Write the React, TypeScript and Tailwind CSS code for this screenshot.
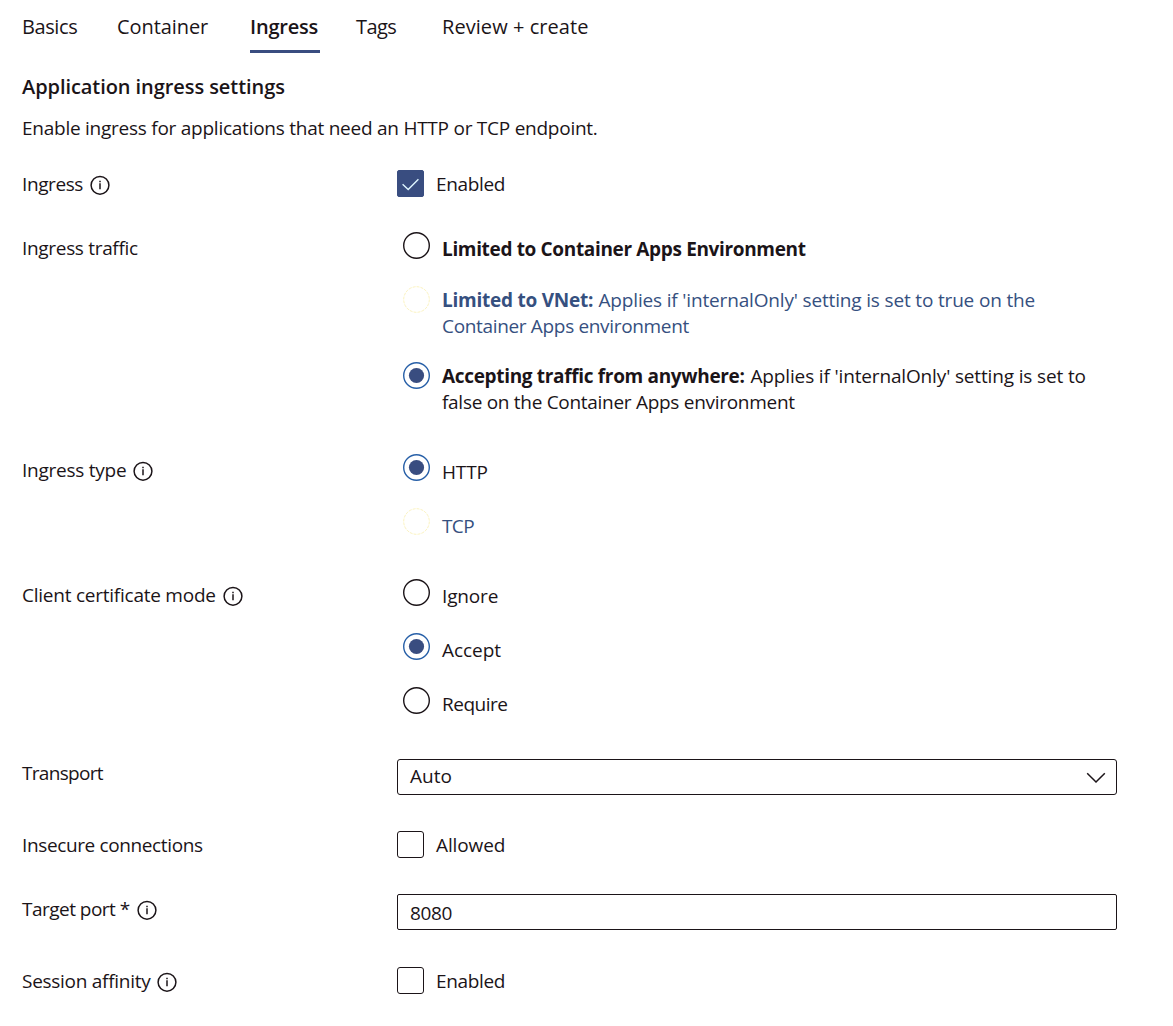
import React, { type ReactNode } from "react";

function InfoIcon({ className = "" }: { className?: string }) {
  return (
    <svg className={`mt-[4px] h-5 w-5 shrink-0 ${className}`} viewBox="0 0 20 20" fill="none" stroke="#1b1418">
      <circle cx="10" cy="10.3" r="8.9" strokeWidth="1.5" />
      <path d="M10 8.3v6" strokeWidth="1.5" />
      <path d="M10 5.7v1.5" strokeWidth="1.5" />
    </svg>
  );
}

function Row({ label, className, pad, icon, children }: {
  label: ReactNode; className: string; pad: string; icon?: string; children: ReactNode;
}) {
  return (
    <div className={`flex items-start ${className}`}>
      <div className={`flex w-[375px] shrink-0 ${pad}`}>
        {label}
        {icon !== undefined && <InfoIcon className={icon} />}
      </div>
      <div className="flex w-[720px] flex-col">{children}</div>
    </div>
  );
}

function Radio({ state = "off", className, pad, children }: {
  state?: "off" | "on" | "disabled"; className: string; pad: string; children: ReactNode;
}) {
  const ring = state === "on" ? "#2860a8" : state === "disabled" ? "#fbf3c0" : "#1b1418";
  return (
    <div className={`flex items-start pl-[6px] ${className}`}>
      <svg className="h-[27px] w-[27px] shrink-0" viewBox="0 0 27 27">
        <circle cx="13.5" cy="13.5" r="12.8" fill="none" stroke={ring} strokeWidth={state === "disabled" ? 1 : 1.4} strokeDasharray={state === "disabled" ? "3 1" : undefined} />
        {state === "on" && <circle cx="13.5" cy="13.5" r="7.6" fill="#394d80" />}
      </svg>
      <div className={`ml-[12px] ${pad} ${state === "disabled" ? "text-[#36507f]" : ""}`}>{children}</div>
    </div>
  );
}

function Checkbox({ checked = false, children }: { checked?: boolean; children: ReactNode }) {
  return (
    <div className="flex items-start">
      <span
        className={`flex h-[27px] w-[27px] shrink-0 items-center justify-center border ${
          checked ? "rounded-[2px] border-[#394d80] bg-[#394d80]" : "rounded-[3px] border-[#1b1418]"
        }`}
      >
        {checked && (
          <svg className="h-[25px] w-[25px]" viewBox="0 0 25 25" fill="none" stroke="#dff6ff" strokeWidth="1.4">
            <path d="M4.6 13.2l5.6 5.4L20.4 8.2" />
          </svg>
        )}
      </span>
      <div className="ml-3 pt-px">{children}</div>
    </div>
  );
}

export default function App() {
  return (
    <main className="h-[1026px] w-[1173px] overflow-hidden bg-white pl-[22px] font-['Open_Sans',sans-serif] text-[19px] leading-[26px] whitespace-nowrap text-[#1b1418]">
      <nav className="flex h-[53px] pt-[14px] text-[20px]">
        <a className="w-[95px] tracking-[-0.4px]">Basics</a>
        <a className="w-[133px] tracking-[-0.08px]">Container</a>
        <a className="mr-9 w-[70px] border-b-3 border-[#394d80] font-semibold tracking-[-0.2px]">Ingress</a>
        <a className="w-[86px] tracking-[-0.55px]">Tags</a>
        <a className="tracking-[0.06px]">Review + create</a>
      </nav>
      <h1 className="mt-[21px] text-[20px] font-semibold tracking-[-0.07px]">Application ingress settings</h1>
      <p className="mt-[15px] mb-[29px] tracking-[-0.25px]">
        Enable ingress for applications that need an HTTP or TCP endpoint.
      </p>

      <Row className="h-[62px]" pad="pt-px" icon="ml-[7px]" label={<span className="w-[61px] tracking-[-0.4px]">Ingress</span>}>
        <Checkbox checked><span className="tracking-[-0.36px]">Enabled</span></Checkbox>
      </Row>

      <Row className="h-[222px]" pad="pt-[3px]" label={<span className="tracking-[-0.316px]">Ingress traffic</span>}>
        <Radio className="h-[54px]" pad="pt-1">
          <b className="tracking-[-0.343px]">Limited to Container Apps Environment</b>
        </Radio>
        <Radio state="disabled" className="h-[76px]" pad="pt-px">
          <b className="inline-block w-[156.5px] tracking-[-0.242px]">Limited to VNet:</b>
          <span className="tracking-[-0.164px]">Applies if 'internalOnly' setting is set to true on the</span>
          <div className="tracking-[-0.333px]">Container Apps environment</div>
        </Radio>
        <Radio state="on" className="" pad="pt-px">
          <b className="inline-block w-[308.5px] tracking-[-0.326px]">Accepting traffic from anywhere:</b>
          <span className="tracking-[-0.149px]">Applies if 'internalOnly' setting is set to</span>
          <div className="tracking-[-0.29px]">false on the Container Apps environment</div>
        </Radio>
      </Row>

      <Row className="h-[125px]" pad="pt-[3px]" icon="ml-[7px]" label={<span className="w-[104px] tracking-[-0.243px]">Ingress type</span>}>
        <Radio state="on" className="h-[54px]" pad="pt-[5px]"><span className="tracking-[-0.146px]">HTTP</span></Radio>
        <Radio state="disabled" className="" pad="pt-[5px]"><span className="tracking-[-0.6px]">TCP</span></Radio>
      </Row>

      <Row className="h-[180px]" pad="pt-[3px]" icon="ml-[7px]" label={<span className="w-[194px] tracking-[-0.24px]">Client certificate mode</span>}>
        <Radio className="h-[54px]" pad="pt-1"><span className="tracking-[-0.15px]">Ignore</span></Radio>
        <Radio state="on" className="h-[54px]" pad="pt-1"><span className="tracking-[-0.05px]">Accept</span></Radio>
        <Radio className="" pad="pt-1"><span className="tracking-[-0.5px]">Require</span></Radio>
      </Row>

      <Row className="h-[72px]" pad="pt-px" label={<span className="tracking-[-0.7px]">Transport</span>}>
        <div className="flex h-9 justify-between rounded-[3px] border border-[#1b1418] pt-[3px] pr-[10px] pl-[12px]">
          <span>Auto</span>
          <svg className="mt-[9px] h-3 w-5" viewBox="0 0 20 12" fill="none" stroke="#1b1418" strokeWidth="1.5">
            <path d="M1.2 1.2L10 10l8.8-8.8" />
          </svg>
        </div>
      </Row>

      <Row className="h-[63px]" pad="pt-px" label={<span className="tracking-[-0.372px]">Insecure connections</span>}>
        <Checkbox><span className="tracking-[-0.12px]">Allowed</span></Checkbox>
      </Row>

      <Row className="h-[73px]" pad="pt-[2px]" icon="ml-[6px]" label={<span className="w-[109px] tracking-[-0.52px]">Target port *</span>}>
        <div className="h-9 rounded-[2px] border border-[#1b1418] pt-[5px] pl-[12px] tracking-[-0.364px]">8080</div>
      </Row>

      <Row className="h-[59px]" pad="pt-px" icon="ml-[7px]" label={<span className="w-[128px] tracking-[-0.28px]">Session affinity</span>}>
        <Checkbox><span className="tracking-[-0.36px]">Enabled</span></Checkbox>
      </Row>
    </main>
  );
}
